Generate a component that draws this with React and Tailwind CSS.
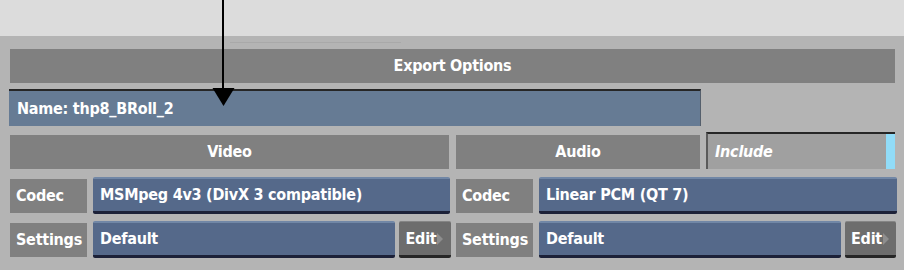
import React from "react";

const font = { fontFamily: '"DejaVu Sans Condensed", "Liberation Sans Narrow", "DejaVu Sans", sans-serif' };

// gray label box
const Label = ({ children, className = "" }) => (
  <div className={`h-[34px] bg-[#808080] text-white flex items-center px-[6px] ${className}`}>
    {children}
  </div>
);

// blue value field
const Field = ({ children, className = "" }) => (
  <div
    className={`h-[37px] bg-[#55698a] text-white flex items-center px-[7px] border-t-2 border-t-[#7187a6] border-b-[3px] border-b-[#1c2138] rounded-[2px] ${className}`}
  >
    {children}
  </div>
);

const EditButton = ({ className = "" }) => (
  <div
    className={`h-[37px] bg-[#6d6d6d] text-white flex items-center justify-center gap-[1px] border-t border-t-[#858585] border-b-[3px] border-b-[#262626] rounded-[2px] ${className}`}
  >
    <span>Edit</span>
    <svg width="7" height="14" viewBox="0 0 7 14" className="shrink-0">
      <polygon points="0,1 6,7 0,13" fill="#8e8e8e" />
    </svg>
  </div>
);

const App = () => {
  return (
    <div
      className="w-[904px] h-[270px] bg-[#b4b4b4] relative overflow-hidden font-semibold text-[16px] tracking-[-0.25px]"
      style={font}
    >
      {/* top light area */}
      <div className="h-[36px] bg-[#dcdcdc]" />

      <div className="pl-[10px] pt-[13px] flex flex-col">
        {/* title bar */}
        <div className="w-[885px] h-[34px] bg-[#808080] text-white flex items-center justify-center">
          Export Options
        </div>

        {/* name field */}
        <div className="mt-[6px] -ml-[1px] w-[692px] h-[37px] bg-[#667b94] text-white flex items-center px-[8px] border-t-2 border-t-[#262626] border-r border-r-[#555f6c]">
          Name: thp8_BRoll_2
        </div>

        {/* video / audio headers */}
        <div className="mt-[6px] flex items-end">
          <div className="w-[439px] h-[34px] bg-[#808080] text-white flex items-center justify-center">
            Video
          </div>
          <div className="ml-[7px] w-[244px] h-[34px] bg-[#808080] text-white flex items-center justify-center">
            Audio
          </div>
          <div className="ml-[6px] w-[189px] h-[37px] bg-[#a0a0a0] text-white italic flex items-center pl-[7px] border-t-2 border-t-[#262626] border-l-2 border-l-[#5a5a5a] relative">
            Include
            <div className="absolute right-0 top-0 bottom-0 w-[9px] bg-[#91dcf8]" />
          </div>
        </div>

        {/* codec row */}
        <div className="mt-[8px] flex items-center">
          <Label className="w-[77px]">Codec</Label>
          <Field className="ml-[6px] w-[357px]">MSMpeg 4v3 (DivX 3 compatible)</Field>
          <Label className="ml-[6px] w-[77px]">Codec</Label>
          <Field className="ml-[6px] w-[358px]">Linear PCM (QT 7)</Field>
        </div>

        {/* settings row */}
        <div className="mt-[7px] flex items-center">
          <Label className="w-[77px]">Settings</Label>
          <Field className="ml-[6px] w-[302px]">Default</Field>
          <EditButton className="ml-[4px] w-[52px]" />
          <Label className="ml-[5px] w-[77px]">Settings</Label>
          <Field className="ml-[6px] w-[302px]">Default</Field>
          <EditButton className="ml-[4px] w-[51px]" />
        </div>
      </div>

      {/* faint line near top */}
      <div className="absolute left-[230px] top-[42px] w-[171px] h-[1px] bg-[#a9a9a9]" />

      {/* annotation arrow */}
      <svg className="absolute left-0 top-0" width="904" height="270">
        <line x1="223" y1="0" x2="223" y2="92" stroke="#000" strokeWidth="2" />
        <polygon points="212.5,88 234.5,88 223.5,106" fill="#000" />
      </svg>
    </div>
  );
};

export default App;
